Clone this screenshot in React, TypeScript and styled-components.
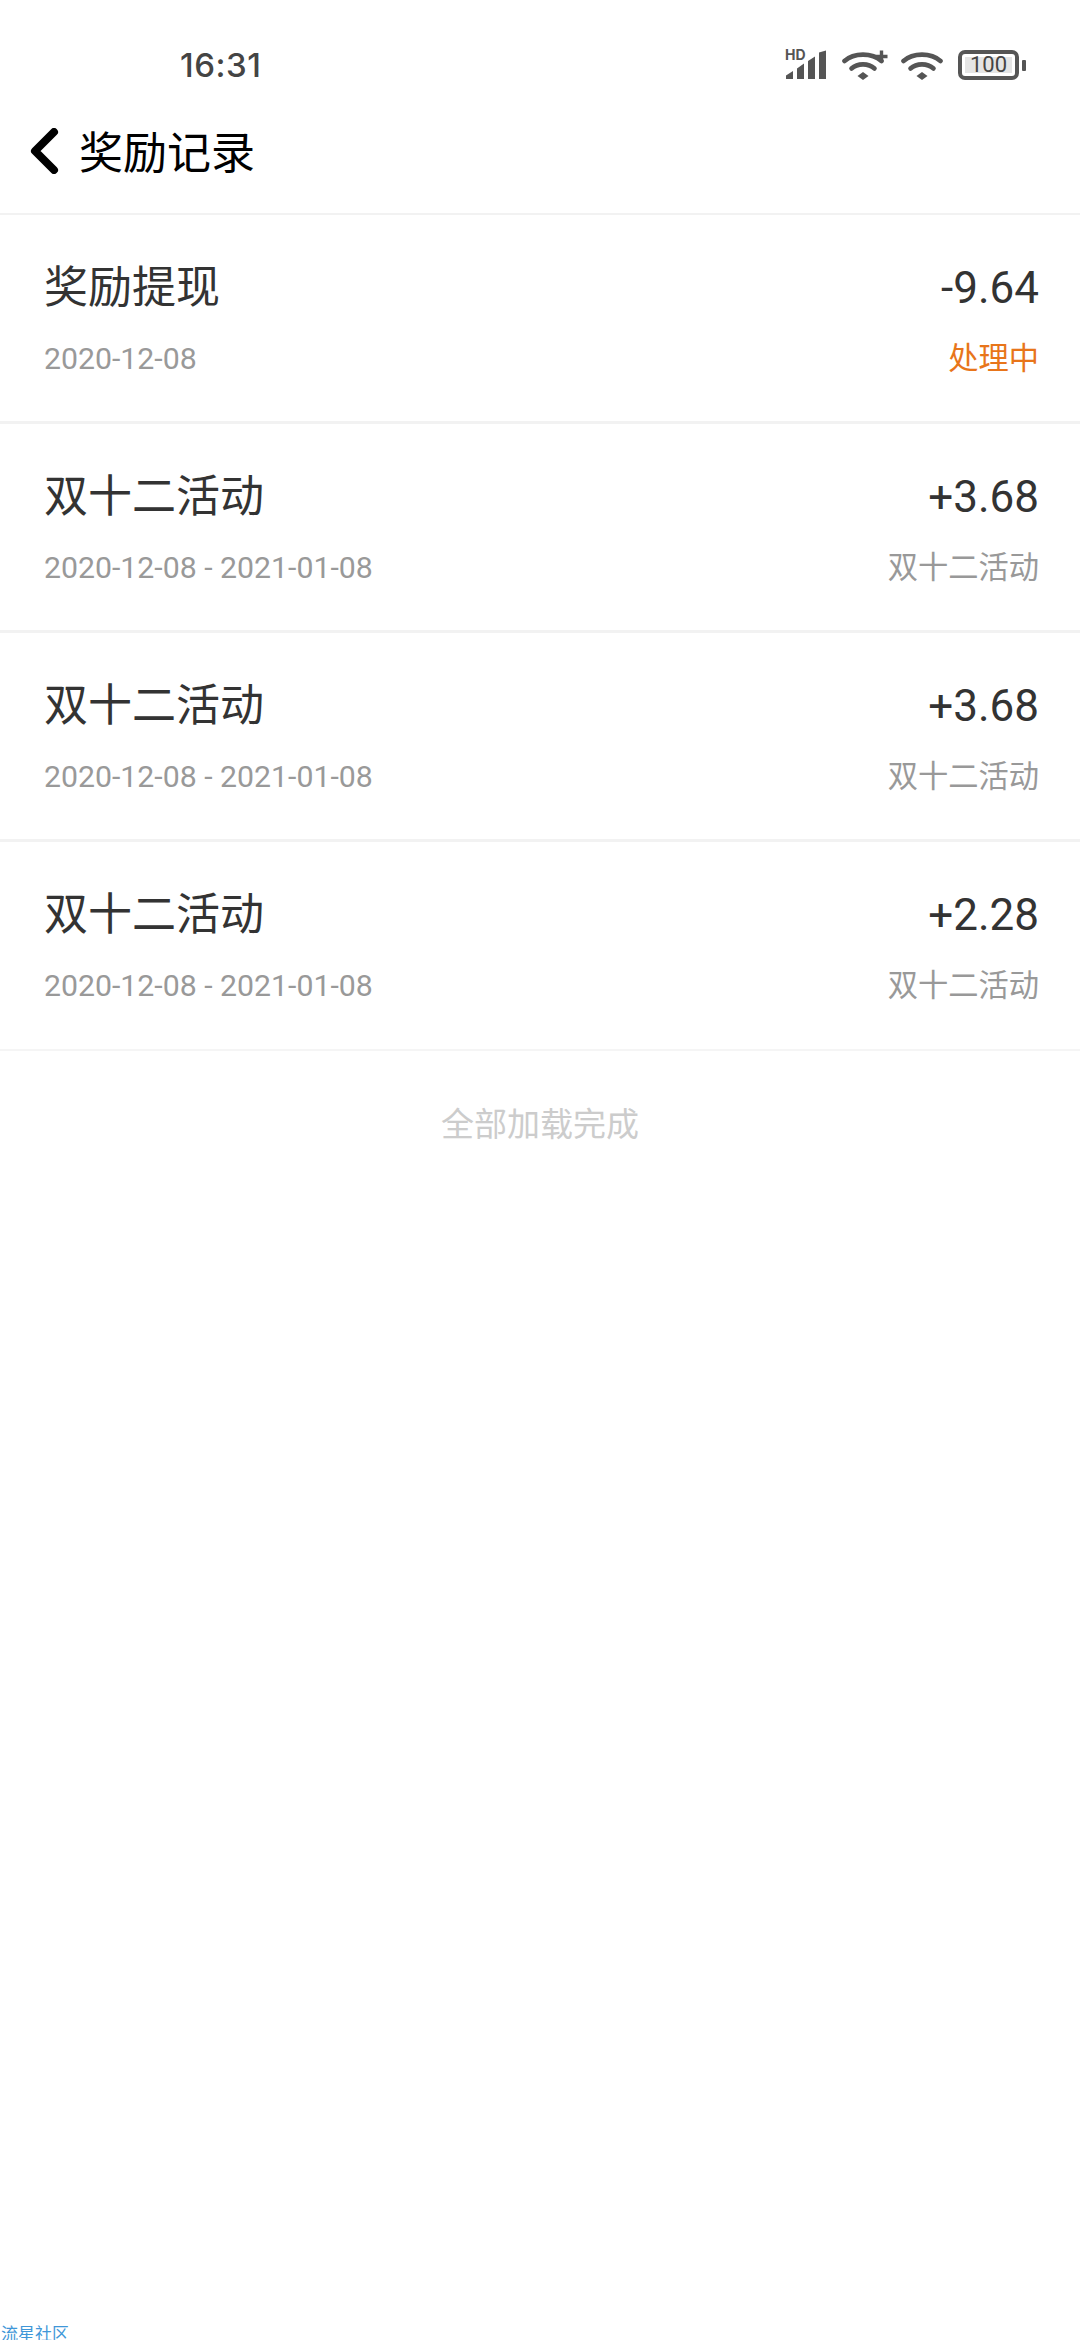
import { createGlobalStyle } from 'styled-components'
import styled from 'styled-components'

interface RewardRecord {
  id: number
  title: string
  date: string
  amount: string
  tag: string
  pending?: boolean
}

const records: RewardRecord[] = [
  { id: 1, title: '奖励提现', date: '2020-12-08', amount: '-9.64', tag: '处理中', pending: true },
  { id: 2, title: '双十二活动', date: '2020-12-08 - 2021-01-08', amount: '+3.68', tag: '双十二活动' },
  { id: 3, title: '双十二活动', date: '2020-12-08 - 2021-01-08', amount: '+3.68', tag: '双十二活动' },
  { id: 4, title: '双十二活动', date: '2020-12-08 - 2021-01-08', amount: '+2.28', tag: '双十二活动' },
]

function SignalIcon() {
  return (
    <SignalWrap>
      <HdLabel>HD</HdLabel>
      <svg width="42" height="30" viewBox="0 0 42 30">
        <path d="M1 29v-3.5l7-4.5v8zM12 29V18.5l7-5V29zM23 29V11l7-4.5V29zM34 29V2.5l7-2V29z" fill="#555" />
      </svg>
    </SignalWrap>
  )
}

function WifiIcon({ plus }: { plus?: boolean }) {
  return (
    <svg width={plus ? 46 : 42} height="30" viewBox={plus ? '0 0 46 30' : '0 0 42 30'} fill="none">
      <path d="M2.5 11C12 2.5 30 2.5 39.5 11" stroke="#555" strokeWidth="4.6" strokeLinecap="round" />
      <path d="M9.5 18.5C15.5 13 26.5 13 32.5 18.5" stroke="#555" strokeWidth="4.6" strokeLinecap="round" />
      <path d="M21 22l5.5 4-5.5 4-5.5-4z" fill="#555" />
      {plus && <path d="M39.5 0.5v12M33.5 6.5h12" stroke="#555" strokeWidth="3.4" />}
    </svg>
  )
}

export default function App() {
  return (
    <Page>
      <GlobalStyle />
      <StatusBar>
        <Clock>16:31</Clock>
        <StatusIcons>
          <SignalIcon />
          <WifiIcon plus />
          <WifiIcon />
          <Battery>
            <BatteryBody><BatteryLevel>100</BatteryLevel></BatteryBody>
            <BatteryTip />
          </Battery>
        </StatusIcons>
      </StatusBar>

      <NavBar>
        <BackIcon width="32" height="46" viewBox="0 0 32 46" fill="none">
          <path d="M26 4L7 23l19 19" stroke="#000" strokeWidth="8" strokeLinejoin="round" strokeLinecap="round" />
        </BackIcon>
        <NavTitle>奖励记录</NavTitle>
      </NavBar>

      <List>
        {records.map((r) => (
          <Row key={r.id}>
            <Line>
              <RowTitle>{r.title}</RowTitle>
              <Amount>{r.amount}</Amount>
            </Line>
            <Line>
              <DateText>{r.date}</DateText>
              <Tag $pending={r.pending}>{r.tag}</Tag>
            </Line>
          </Row>
        ))}
      </List>

      <Finished>全部加载完成</Finished>
      <Watermark>流星社区</Watermark>
    </Page>
  )
}

const GlobalStyle = createGlobalStyle`
  html, body {
    margin: 0;
    background: #fff;
  }
`

const Page = styled.div`
  height: 2340px;
  overflow: hidden;
  display: flex;
  flex-direction: column;
  background: #fff;
  font-family: Roboto, "Noto Sans CJK SC", sans-serif;
`

const StatusBar = styled.div`
  height: 90px;
  flex-shrink: 0;
  display: flex;
  align-items: center;
  justify-content: space-between;
  padding: 40px 54px 0 180px;
  box-sizing: border-box;
`

const Clock = styled.span`
  font-family: Inter, sans-serif;
  font-size: 33px;
  font-weight: 500;
  color: #444;
  letter-spacing: 0.5px;
`

const StatusIcons = styled.div`
  display: flex;
  align-items: center;
  gap: 13px;
`

const SignalWrap = styled.div`
  position: relative;
  width: 44px;
  height: 30px;
`

const HdLabel = styled.span`
  position: absolute;
  left: 0;
  top: -2px;
  font-family: Inter, sans-serif;
  font-size: 14px;
  line-height: 14px;
  font-weight: 700;
  color: #555;
`

const Battery = styled.div`
  display: flex;
  align-items: center;
  gap: 3px;
  margin-left: 2px;
`

const BatteryBody = styled.div`
  width: 61px;
  height: 30px;
  box-sizing: border-box;
  border: 4px solid #555;
  border-radius: 7px;
  padding: 3px;
  display: flex;
`

const BatteryLevel = styled.span`
  flex: 1;
  background: #e4e4e4;
  color: #444;
  font-family: Roboto, sans-serif;
  font-size: 22px;
  line-height: 16px;
  text-align: center;
  white-space: nowrap;
`

const BatteryTip = styled.span`
  width: 4px;
  height: 11px;
  background: #555;
  border-radius: 1px;
`

const NavBar = styled.div`
  height: 125px;
  flex-shrink: 0;
  box-sizing: border-box;
  display: flex;
  align-items: center;
  gap: 19px;
  padding: 0 0 3px 28px;
  border-bottom: 2px solid #f2f2f2;
`

const BackIcon = styled.svg`
  margin-top: 1px;
`

const NavTitle = styled.h1`
  margin: 0;
  font-size: 44px;
  font-weight: 400;
  color: #000;
`

const List = styled.div`
  display: flex;
  flex-direction: column;
`

const Row = styled.div`
  height: 209px;
  flex-shrink: 0;
  box-sizing: border-box;
  padding: 43px 41px 0 44px;
  display: flex;
  flex-direction: column;
  gap: 20px;
  border-bottom: 3px solid #f2f2f2;

  &:last-child {
    border-bottom: 2px solid #f5f5f5;
  }
`

const Line = styled.div`
  display: flex;
  justify-content: space-between;
  align-items: center;
`

const RowTitle = styled.span`
  font-size: 44px;
  line-height: 60px;
  color: #333;
`

const Amount = styled.span`
  font-size: 44px;
  line-height: 60px;
  color: #333;
`

const DateText = styled.span`
  font-size: 30.25px;
  line-height: 42px;
  color: #999;
`

const Tag = styled.span<{ $pending?: boolean }>`
  font-size: 30.25px;
  line-height: 42px;
  color: ${(p) => (p.$pending ? '#e8751a' : '#999')};
`

const Finished = styled.div`
  margin-top: 52px;
  text-align: center;
  font-size: 33px;
  line-height: 44px;
  color: #ccc;
`

const Watermark = styled.div`
  margin-top: auto;
  margin-bottom: -4px;
  padding-left: 1px;
  font-size: 17px;
  line-height: 20px;
  color: #3f97d8;
`
